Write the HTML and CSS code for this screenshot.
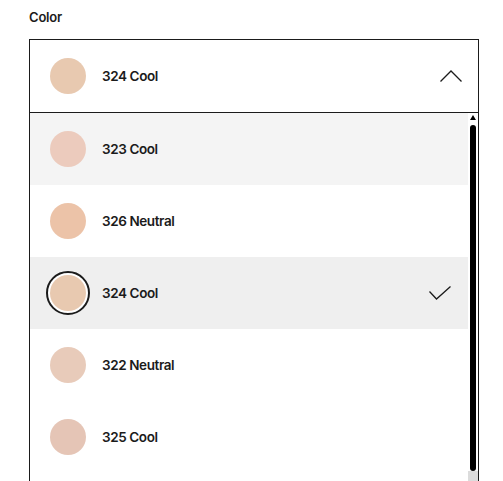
FILE: index.html
```html
<!DOCTYPE html>
<html lang="en">
<head>
<meta charset="utf-8">
<title>Color select</title>
<link rel="stylesheet" href="styles.css">
</head>
<body>
<div class="field">
  <div class="label">Color</div>
  <div class="select">
    <div class="trigger">
      <span class="swatch" style="background:#e8c9b0"></span>
      <span class="name">324 Cool</span>
      <svg class="chevron" width="22" height="12" viewBox="0 0 22 12"><path d="M0.5 11.5 L11 1 L21.5 11.5" fill="none" stroke="#1b1b1b" stroke-width="1.3"/></svg>
    </div>
    <div class="listbox">
      <ul class="options">
        <li class="option hover"><span class="swatch" style="background:#eccbbd"></span><span class="name">323 Cool</span></li>
        <li class="option"><span class="swatch" style="background:#ecc3a8"></span><span class="name">326 Neutral</span></li>
        <li class="option selected"><span class="ring"><span class="swatch" style="background:#e8c9b0"></span></span><span class="name">324 Cool</span>
          <svg class="check" width="22" height="14" viewBox="0 0 22 14"><path d="M0.5 5.5 L7.5 13 L21.5 0.5" fill="none" stroke="#1b1b1b" stroke-width="1.3"/></svg></li>
        <li class="option"><span class="swatch" style="background:#e8cbba"></span><span class="name">322 Neutral</span></li>
        <li class="option"><span class="swatch" style="background:#e5c5b6"></span><span class="name">325 Cool</span></li>
      </ul>
      <div class="scrollbar">
        <span class="arrow"></span>
        <span class="thumb"></span>
        <span class="rest"></span>
      </div>
    </div>
  </div>
</div>
</body>
</html>
```
FILE: styles.css
```css
html, body {
  margin: 0;
  padding: 0;
  overflow: hidden;
  background: #fff;
}
body {
  font-family: "Inter", "Liberation Sans", sans-serif;
  color: #1b1b1b;
  width: 503px;
  height: 481px;
}
.field {
  padding: 9px 24px 0 29px;
}
.label {
  font-size: 13px;
  font-weight: 600;
  line-height: 16px;
  letter-spacing: -0.2px;
  margin-bottom: 14px;
}
.select {
  width: 450px;
  box-sizing: border-box;
  border: 1px solid #1b1b1b;
  border-bottom: none;
}
.trigger {
  height: 72px;
  border-bottom: 1px solid #1b1b1b;
  display: flex;
  align-items: center;
  padding: 0 16px 0 20px;
}
.swatch {
  display: block;
  width: 36px;
  height: 36px;
  border-radius: 50%;
  flex: none;
}
.name {
  font-size: 13.5px;
  font-weight: 600;
  letter-spacing: -0.4px;
  margin-left: 16px;
  flex: 1;
}
.chevron, .check {
  flex: none;
  display: block;
}
.listbox {
  height: 368px;
  overflow: hidden;
  display: flex;
}
.options {
  list-style: none;
  margin: 0;
  padding: 0;
  flex: 1;
}
.option {
  height: 72px;
  display: flex;
  align-items: center;
  padding: 0 17px 0 20px;
}
.option.hover { background: #f4f4f4; }
.option.selected { background: #efefef; }
.option.selected .name { margin-left: 12px; }
.ring {
  width: 40px;
  height: 40px;
  border: 2px solid #1b1b1b;
  border-radius: 50%;
  display: flex;
  align-items: center;
  justify-content: center;
  margin-left: -4px;
  background: #fff;
  flex: none;
}
.scrollbar {
  width: 10px;
  flex: none;
  display: flex;
  flex-direction: column;
  align-items: center;
  background: #fff;
}
.arrow {
  margin-top: 2px;
  width: 0;
  height: 0;
  border-left: 3px solid transparent;
  border-right: 3px solid transparent;
  border-bottom: 5px solid #000;
}
.thumb {
  margin-top: 5px;
  width: 6px;
  height: 346px;
  background: #000;
  border-radius: 3px;
}
.rest {
  flex: 1;
  align-self: stretch;
  background: #dcdcdc;
}
```
